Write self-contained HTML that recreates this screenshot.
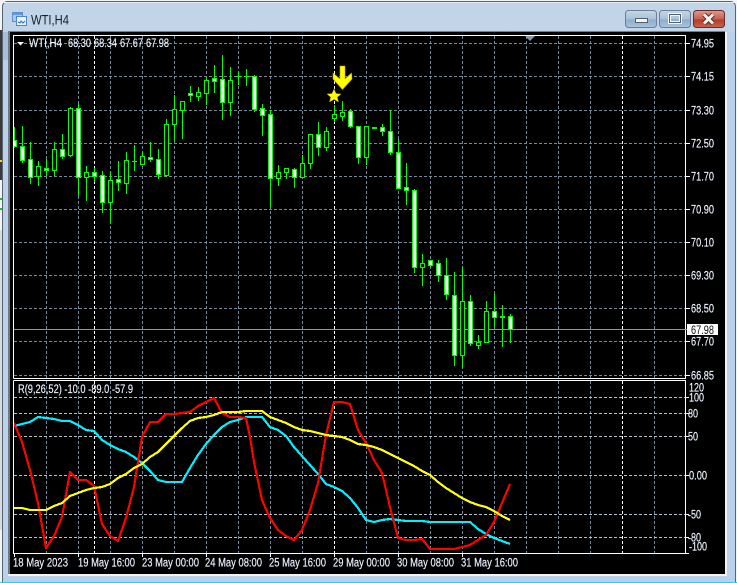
<!DOCTYPE html>
<html><head><meta charset="utf-8"><title>WTI,H4</title>
<style>
html,body{margin:0;padding:0;background:#fff;width:737px;height:583px;overflow:hidden}
svg{display:block;position:absolute;left:0;top:0}
text{font-family:"Liberation Sans",sans-serif;font-size:11.5px;fill:#f0f5ff;stroke:#e4ecff;stroke-width:.15}
</style></head><body>
<svg width="737" height="583" viewBox="0 0 737 583" xmlns="http://www.w3.org/2000/svg">
<defs>
<linearGradient id="tb" x1="0" y1="0" x2="0" y2="1"><stop offset="0" stop-color="#c3d5e8"/><stop offset="1" stop-color="#a3bfdc"/></linearGradient>
<linearGradient id="bt" x1="0" y1="0" x2="0" y2="1"><stop offset="0" stop-color="#c6d6e6"/><stop offset=".5" stop-color="#a9c1da"/><stop offset=".55" stop-color="#8fadcb"/><stop offset="1" stop-color="#a8c4de"/></linearGradient>
<linearGradient id="cl" x1="0" y1="0" x2="0" y2="1"><stop offset="0" stop-color="#dc9a8e"/><stop offset=".5" stop-color="#c8604f"/><stop offset=".55" stop-color="#b23c2a"/><stop offset="1" stop-color="#c8644e"/></linearGradient>
<clipPath id="p1"><rect x="14" y="36" width="671" height="342"/></clipPath>
<clipPath id="p2"><rect x="14" y="381" width="671" height="172"/></clipPath>
</defs>
<rect width="737" height="583" fill="#f2f4f6"/>
<rect x="0" y="30" width="2" height="150" fill="#3a3a3a"/>
<rect x="0" y="160" width="2" height="2" fill="#e8d800"/>
<rect x="0" y="198" width="2" height="2" fill="#18c818"/>
<rect x="0" y="208" width="2" height="2" fill="#18c818"/>
<rect x="0" y="402" width="2" height="8" fill="#2060b0"/>
<rect x="0" y="423" width="2" height="14" fill="#ffffff"/>
<rect x="0" y="230" width="2" height="300" fill="#d8dce0"/>
<rect x="2.5" y="1.5" width="733" height="590" rx="5" fill="url(#tb)" stroke="#5a6470"/>
<rect x="3" y="32" width="732" height="550" fill="#b9d1ea"/>
<rect x="3" y="32" width="5" height="28" fill="#a6c0da"/>
<rect x="3" y="2" width="732" height="1" fill="#e4ecf4"/>
<rect x="8" y="32" width="719" height="544" fill="#f0f3f6"/>
<rect x="8" y="32" width="2" height="542" fill="#707880"/>
<rect x="8" y="31" width="717" height="1" fill="#70808e"/>
<rect x="10" y="32" width="715" height="542" fill="#000"/>
<rect x="0" y="582" width="737" height="1" fill="#3cc8e4"/>

<!-- title icon -->
<rect x="12.5" y="12.5" width="10" height="9" fill="#a8c8ee" stroke="#5f8fc8"/>
<rect x="16.5" y="16.5" width="10" height="9" fill="#e8f2fc" stroke="#4f86c8"/>
<path d="M18 22l2 1 1-2 2 2 2-2" fill="none" stroke="#3070c0"/>
<rect x="13" y="13" width="9" height="2" fill="#5f9ae0"/>
<text x="31" y="24.5" textLength="38" lengthAdjust="spacingAndGlyphs" style="font-size:14px;fill:#16212c;stroke:none">WTI,H4</text>

<!-- buttons -->
<rect x="625.5" y="10.5" width="31" height="17" rx="3" fill="url(#bt)" stroke="#6c7f96"/>
<rect x="635.5" y="18.5" width="12" height="4" fill="#f4f6f8" stroke="#55606c"/>
<rect x="659.5" y="10.5" width="31" height="17" rx="3" fill="url(#bt)" stroke="#6c7f96"/>
<rect x="669.5" y="14.5" width="11" height="8" fill="none" stroke="#f4f6f8" stroke-width="3"/>
<rect x="669.5" y="14.5" width="11" height="8" fill="none" stroke="#55606c"/>
<rect x="693.5" y="10.5" width="31" height="17" rx="3" fill="url(#cl)" stroke="#6a2a28"/>
<path d="M704 14.5l9 9M713 14.5l-9 9" stroke="#55302c" stroke-width="5"/>
<path d="M704 14.5l9 9M713 14.5l-9 9" stroke="#f6f2f0" stroke-width="3"/>

<!-- grid -->
<g stroke="#778899" fill="none" stroke-dasharray="3 2" shape-rendering="crispEdges">
<path clip-path="url(#p1)" d="M14 43.5H685M14 76.5H685M14 110.5H685M14 143.5H685M14 176.5H685M14 209.5H685M14 242.5H685M14 275.5H685M14 308.5H685M14 341.5H685M14 375.5H685"/>
<path clip-path="url(#p1)" d="M46.5 36V378M78.5 36V378M110.5 36V378M142.5 36V378M174.5 36V378M206.5 36V378M238.5 36V378M270.5 36V378M302.5 36V378M366.5 36V378M398.5 36V378M430.5 36V378M462.5 36V378M494.5 36V378M526.5 36V378M558.5 36V378M590.5 36V378M654.5 36V378"/>
<path clip-path="url(#p2)" d="M46.5 381V553M78.5 381V553M110.5 381V553M142.5 381V553M174.5 381V553M206.5 381V553M238.5 381V553M270.5 381V553M302.5 381V553M366.5 381V553M398.5 381V553M430.5 381V553M462.5 381V553M494.5 381V553M526.5 381V553M558.5 381V553M590.5 381V553M654.5 381V553"/>
<path clip-path="url(#p2)" stroke="#b8c2cc" d="M14 397.5H685M14 413.5H685M14 436.5H685M14 475.5H685M14 514.5H685M14 537.5H685"/>
<path stroke="#fff" d="M94.5 36V378M334.5 36V378M622.5 36V378M94.5 381V553M334.5 381V553M622.5 381V553"/>
</g>
<rect x="14" y="329" width="671" height="1" fill="#8a96a2"/>

<!-- wicks -->
<path shape-rendering="crispEdges" clip-path="url(#p1)" stroke="#00ff00" fill="none" d="M14.5 127V148M22.5 126V163M30.5 142V184M38.5 161V186M46.5 159V176M54.5 142V176M62.5 134V159M70.5 107V157M78.5 103V196M86.5 166V201M94.5 168V182M102.5 171V213M110.5 172V223M118.5 161V191M126.5 152V194M134.5 145V171M142.5 152V165M150.5 142V162M158.5 149V179M166.5 119V177M174.5 95V141M182.5 101V139M190.5 86V102M198.5 87V101M206.5 78V105M214.5 65V93M222.5 55V120M230.5 67V116M238.5 72V85M246.5 69V86M254.5 75V112M262.5 104V136M270.5 110V207M278.5 165V186M286.5 168V179M294.5 168V188M302.5 155V178M310.5 134V169M318.5 122V156M326.5 127V151M334.5 105V122M342.5 101V121M350.5 109V128M358.5 126V164M366.5 126V165M374.5 127V129M382.5 124V136M390.5 110V155M398.5 139V189M406.5 163V205M414.5 189V273M422.5 254V286M430.5 260V267M438.5 260V282M446.5 258V300M454.5 272V366M462.5 267V368M470.5 295V346M478.5 335V349M486.5 301V343M494.5 293V328M502.5 305V347M510.5 314V343M132 161.5H137M236 76.5H241M244 76.5H249"/>
<!-- white bodies -->
<path shape-rendering="crispEdges" clip-path="url(#p1)" stroke="#00ff00" fill="#fff" d="M12.5 140.5h4v6h-4zM20.5 146.5h4v14h-4zM28.5 159.5h4v18h-4zM44.5 168.5h4v2h-4zM60.5 149.5h4v7h-4zM76.5 108.5h4v69h-4zM92.5 172.5h4v4h-4zM100.5 175.5h4v27h-4zM116.5 179.5h4v3h-4zM148.5 157.5h4v2h-4zM156.5 159.5h4v15h-4zM188.5 93.5h4v2h-4zM212.5 78.5h4v3h-4zM220.5 79.5h4v23h-4zM252.5 76.5h4v33h-4zM260.5 108.5h4v7h-4zM268.5 114.5h4v64h-4zM292.5 169.5h4v8h-4zM316.5 134.5h4v13h-4zM348.5 111.5h4v15h-4zM356.5 126.5h4v31h-4zM372.5 127.5h4v1h-4zM380.5 127.5h4v4h-4zM388.5 131.5h4v21h-4zM396.5 152.5h4v36h-4zM404.5 187.5h4v3h-4zM412.5 190.5h4v77h-4zM428.5 260.5h4v5h-4zM436.5 263.5h4v12h-4zM444.5 275.5h4v19h-4zM452.5 295.5h4v60h-4zM468.5 301.5h4v42h-4zM492.5 311.5h4v6h-4zM500.5 316.5h4v1h-4zM508.5 316.5h4v13h-4z"/>
<!-- black bodies -->
<path shape-rendering="crispEdges" clip-path="url(#p1)" stroke="#00ff00" fill="#000" d="M36.5 166.5h4v10h-4zM52.5 149.5h4v21h-4zM68.5 108.5h4v47h-4zM84.5 172.5h4v5h-4zM108.5 180.5h4v22h-4zM124.5 160.5h4v23h-4zM140.5 156.5h4v8h-4zM164.5 124.5h4v51h-4zM172.5 109.5h4v15h-4zM180.5 101.5h4v9h-4zM196.5 92.5h4v4h-4zM204.5 80.5h4v13h-4zM228.5 80.5h4v22h-4zM276.5 172.5h4v6h-4zM284.5 168.5h4v4h-4zM300.5 163.5h4v14h-4zM308.5 134.5h4v29h-4zM324.5 131.5h4v16h-4zM332.5 114.5h4v4h-4zM340.5 112.5h4v4h-4zM364.5 126.5h4v31h-4zM420.5 263.5h4v4h-4zM460.5 301.5h4v54h-4zM476.5 342.5h4v3h-4zM484.5 311.5h4v31h-4z"/>

<!-- frames -->
<g fill="none" stroke="#fff" shape-rendering="crispEdges">
<path d="M13.5 378.5V35.5H685.5V378.5H13.5"/>
<path d="M13.5 380.5H685.5V553.5H13.5V380.5"/>
<path d="M686 43.5h4M686 76.5h4M686 110.5h4M686 143.5h4M686 176.5h4M686 209.5h4M686 242.5h4M686 275.5h4M686 308.5h4M686 341.5h4M686 375.5h4M686 397.5h3M686 413.5h3M686 436.5h3M686 475.5h3M686 514.5h3M686 537.5h3M686 553.5h3"/>
<path d="M14.5 553v4M78.5 553v4M142.5 553v4M206.5 553v4M270.5 553v4M334.5 553v4M398.5 553v4M462.5 553v4"/>
</g>
<polygon points="525,36 535,36 530,41" fill="#8a96a2"/>

<!-- lines -->
<g fill="none" stroke-width="2.2" stroke-linejoin="round" clip-path="url(#p2)" shape-rendering="crispEdges">
<polyline stroke="#00f0ff" points="14,426 22,424 30,422 38,417 46,418 54,419 62,421 70,421 78,425 86,430 94,431 102,440 110,445 118,449 126,452 134,457 142,463 150,471 158,480 166,482 174,482 182,482 190,468 198,455 206,444 214,435 222,427 230,422 238,420 246,417 254,417 262,417 270,427 278,430 286,436 294,447 302,456 310,465 318,474 326,484 334,487 342,491 350,498 358,508 366,520 374,522 382,520 390,519 398,520 406,521 414,521 422,521 430,522 438,522 446,522 454,522 462,522 470,522 478,529 486,534 494,538 502,541 510,544"/>
<polyline stroke="#ff0000" points="14,423 22,442 30,470 38,503 46,548 54,536 62,517 70,472 78,480 86,480 94,486 102,524 110,536 118,541 126,518 134,487 142,437 150,422 158,422 166,414 174,414 182,413 190,412 198,406 206,402 214,398 222,413 230,417 238,417 246,418 250,437 254,462 262,500 270,518 278,530 286,536 294,540 302,530 310,510 318,483 326,435 334,402 342,402 350,404 358,430 366,443 374,460 382,473 390,507 398,538 406,540 414,540 422,539 430,549 438,549 446,549 454,549 462,547 470,545 478,540 486,535 494,522 502,503 510,484"/>
<polyline stroke="#ffff00" points="14,508 22,508 30,510 38,510 46,510 54,506 62,503 70,496 78,493 86,490 94,488 102,487 110,484 118,478 126,474 134,468 142,464 150,457 158,452 166,444 174,436 182,428 190,421 198,418 206,417 214,415 222,412 230,412 238,412 246,411 254,411 262,411 270,417 278,420 286,423 294,427 302,430 310,431 318,433 326,435 334,436 342,437 350,440 358,444 366,445 374,447 382,450 390,454 398,458 406,462 414,466 422,471 430,475 438,482 446,488 454,493 462,498 470,502 478,505 486,507 494,511 502,516 510,520"/>
</g>

<!-- arrow + star -->
<polygon points="340,66 345,66 345,79 351.5,73 352,79 342.5,89.5 333,79 333,73 340,79" fill="#ffff00" stroke="#c8a000" stroke-width=".6"/>
<polygon points="334,89 336,93.5 341,94 337.3,97.2 338.5,102 334,99.4 329.5,102 330.7,97.2 327,94 332,93.5" fill="#ffff00" stroke="#b89000" stroke-width=".5"/>

<!-- header -->
<polygon points="17,42 24,42 20.5,45.5" fill="#fff"/>
<text x="29" y="47" textLength="33" lengthAdjust="spacingAndGlyphs">WTI,H4</text>
<text x="68" y="47" textLength="23" lengthAdjust="spacingAndGlyphs">68.30</text>
<text x="94" y="47" textLength="23" lengthAdjust="spacingAndGlyphs">68.34</text>
<text x="120" y="47" textLength="23" lengthAdjust="spacingAndGlyphs">67.67</text>
<text x="146" y="47" textLength="23" lengthAdjust="spacingAndGlyphs">67.98</text>
<text x="18" y="393" textLength="115" lengthAdjust="spacingAndGlyphs">R(9,26,52) -10.0 -89.0 -57.9</text>

<!-- price axis -->
<g>
<text x="691" y="47.5" textLength="23" lengthAdjust="spacingAndGlyphs">74.95</text>
<text x="691" y="80.5" textLength="23" lengthAdjust="spacingAndGlyphs">74.15</text>
<text x="691" y="114.5" textLength="23" lengthAdjust="spacingAndGlyphs">73.30</text>
<text x="691" y="147.5" textLength="23" lengthAdjust="spacingAndGlyphs">72.50</text>
<text x="691" y="180.5" textLength="23" lengthAdjust="spacingAndGlyphs">71.70</text>
<text x="691" y="213.5" textLength="23" lengthAdjust="spacingAndGlyphs">70.90</text>
<text x="691" y="246.5" textLength="23" lengthAdjust="spacingAndGlyphs">70.10</text>
<text x="691" y="279.5" textLength="23" lengthAdjust="spacingAndGlyphs">69.30</text>
<text x="691" y="312.5" textLength="23" lengthAdjust="spacingAndGlyphs">68.50</text>
<text x="691" y="345.5" textLength="23" lengthAdjust="spacingAndGlyphs">67.70</text>
<text x="691" y="379.5" textLength="23" lengthAdjust="spacingAndGlyphs">66.85</text>
<rect x="687" y="324" width="31" height="11" fill="#fff"/>
<path d="M685 329.5h2" stroke="#8a96a2"/>
<text x="691" y="334" textLength="23" lengthAdjust="spacingAndGlyphs" style="fill:#111;stroke:none">67.98</text>
<text x="689" y="391.5" textLength="15" lengthAdjust="spacingAndGlyphs">120</text>
<text x="689" y="401.5" textLength="15" lengthAdjust="spacingAndGlyphs">100</text>
<text x="688" y="417.5" textLength="10" lengthAdjust="spacingAndGlyphs">80</text>
<text x="688" y="440.5" textLength="10" lengthAdjust="spacingAndGlyphs">50</text>
<text x="689" y="479.5" textLength="18" lengthAdjust="spacingAndGlyphs">0.00</text>
<text x="688" y="518.5" textLength="13" lengthAdjust="spacingAndGlyphs">-50</text>
<text x="688" y="541.5" textLength="13" lengthAdjust="spacingAndGlyphs">-80</text>
<text x="689" y="550.5" textLength="18" lengthAdjust="spacingAndGlyphs">-100</text>
</g>

<!-- time axis -->
<g>
<text x="13" y="566.5" textLength="55" lengthAdjust="spacingAndGlyphs">18 May 2023</text>
<text x="78" y="566.5" textLength="57" lengthAdjust="spacingAndGlyphs">19 May 16:00</text>
<text x="142" y="566.5" textLength="57" lengthAdjust="spacingAndGlyphs">23 May 00:00</text>
<text x="205" y="566.5" textLength="57" lengthAdjust="spacingAndGlyphs">24 May 08:00</text>
<text x="269" y="566.5" textLength="57" lengthAdjust="spacingAndGlyphs">25 May 16:00</text>
<text x="333" y="566.5" textLength="57" lengthAdjust="spacingAndGlyphs">29 May 00:00</text>
<text x="397" y="566.5" textLength="57" lengthAdjust="spacingAndGlyphs">30 May 08:00</text>
<text x="461" y="566.5" textLength="57" lengthAdjust="spacingAndGlyphs">31 May 16:00</text>
</g>
</svg>
</body></html>
